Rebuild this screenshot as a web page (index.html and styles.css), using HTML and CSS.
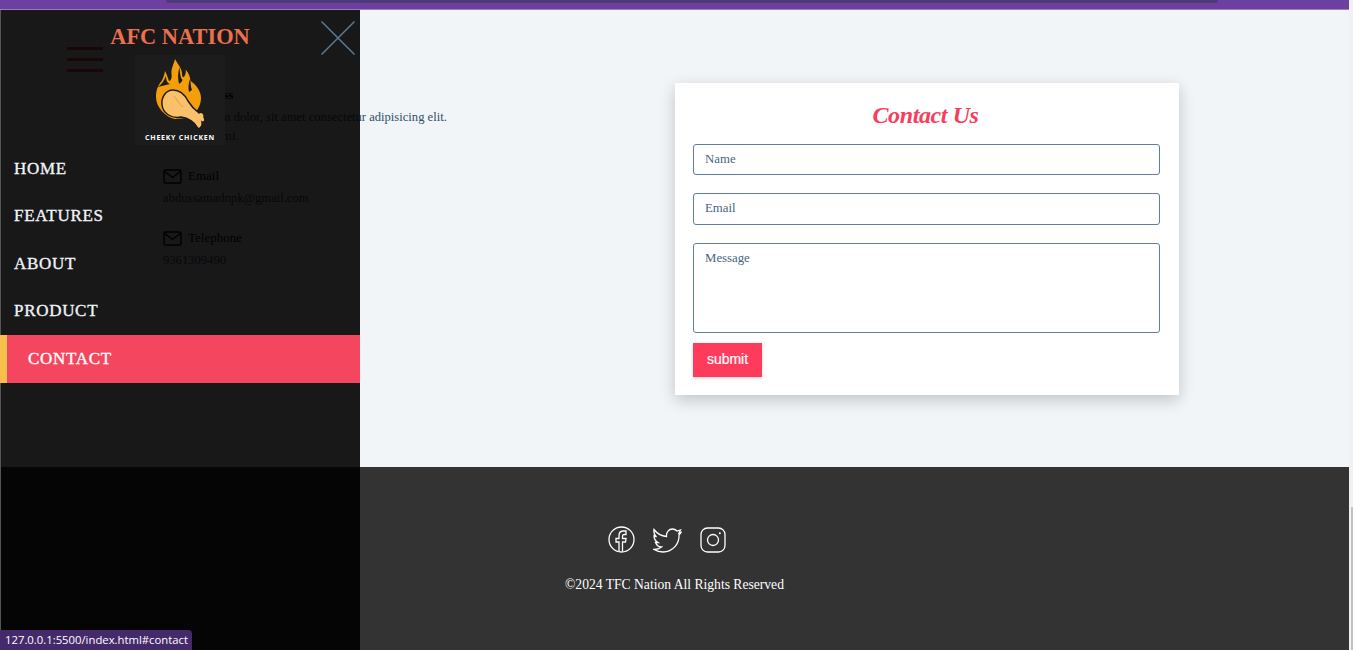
FILE: index.html
```html
<!DOCTYPE html>
<html lang="en">
<head>
<meta charset="utf-8">
<title>AFC Nation Contact</title>
<link rel="stylesheet" href="styles.css">
</head>
<body>
<div class="page">
  <div class="content">
    <div class="topbar"><div class="topbar-strip"></div></div>
    <main class="contact">
      <section class="info">
        <div class="info-block first">
          <h4 class="info-head"><svg class="mail" viewBox="0 0 20 16"><rect x="1" y="1" width="18" height="14" rx="1.500"/><path d="M1.500 2.500 10 9l8.500-6.500"/></svg>Address</h4>
          <p class="info-text">Lorem ipsum dolor, sit amet consectetur adipisicing elit.<br>Quidem animi.</p>
        </div>
        <div class="info-block">
          <h4 class="info-head"><svg class="mail" viewBox="0 0 20 16"><rect x="1" y="1" width="18" height="14" rx="1.500"/><path d="M1.500 2.500 10 9l8.500-6.500"/></svg>Email</h4>
          <p class="info-text">abdussamadnpk@gmail.com</p>
        </div>
        <div class="info-block">
          <h4 class="info-head"><svg class="mail" viewBox="0 0 20 16"><rect x="1" y="1" width="18" height="14" rx="1.500"/><path d="M1.500 2.500 10 9l8.500-6.500"/></svg>Telephone</h4>
          <p class="info-text">9361309490</p>
        </div>
      </section>
      <form class="card">
        <h2 class="card-title">Contact Us</h2>
        <input class="field field-name" type="text" placeholder="Name">
        <input class="field field-email" type="text" placeholder="Email">
        <textarea class="field field-msg" placeholder="Message"></textarea>
        <button class="submit" type="button">submit</button>
      </form>
    </main>
    <footer class="footer">
      <div class="socials">
        <svg class="social fb" viewBox="0 0 27 27"><circle cx="13.500" cy="13.500" r="12.500"/><path d="M11 26V16H8v-3.500h3V9.500C11 6.500 13 5 15.500 5H18v3.500h-2c-1 0-1.500.5-1.500 1.500v2.500H18l-.5 3.500h-3v9.500"/></svg>
        <svg class="social tw" viewBox="0 0 29 26"><path d="M1 2.500c3 4 7 6.500 12.500 7C13 5 16 2 19.500 2c2 0 3.500 1 4.500 2l3.500-1-1.500 3 2-.5-2 2.500C26.500 16.500 20 25 10 25c-3.500 0-6.500-1-9-2.500 3 0 5.500-.8 7.500-2.500-3 0-5-2-6-4.500h2.500C2.500 14 1 11.500 1 9l2.500 1C1.500 8 .5 5 1 2.500Z"/></svg>
        <svg class="social ig" viewBox="0 0 26 26"><rect x="1" y="1" width="24" height="24" rx="6.500"/><circle cx="13" cy="13" r="5.500"/><circle class="dot" cx="19.800" cy="6.200" r="1"/></svg>
      </div>
      <p class="copyright">©2024 TFC Nation All Rights Reserved</p>
    </footer>
  </div>
  <div class="scrollbar"><div class="thumb"></div></div>
</div>

<div class="burger"><span></span><span></span><span></span></div>

<aside class="sidebar">
  <h1 class="brand">AFC NATION</h1>
  <svg class="close" viewBox="0 0 34 34"><path d="M.5.500l33 33M33.500.500l-33 33"/></svg>
  <div class="logo">
    <svg class="logo-art" viewBox="0 0 90 76">
      <path class="flame" d="M40 4C43 10 47 13 47 19 47 23 49 23 50 20 51 18 51 16 50.500 14.500 54 18 55 22 55.500 26 60 29 66 35 66 43 66 52 60 60 52 63L40 64C30 62 21 52 21 42 21 35 23 31 25 28 27 26 29 22 30 16 32 20 33 23 34 26 36 26 37 23 36.500 19 36 13 39 9 40 4Z"/>
      <path class="notch" d="M35 29C32 28 31 25 31 21 29 26 26 30 22.500 32 27 31 31 30 35 29ZM47.500 25C45 22 45 17 44.500 12 43 17 42.500 23 44 29 45 28 47 27 47.500 25ZM57 35C55.500 32 56 28 55 24 53.500 28 53 33 54 37 55 36 56 36 57 35Z"/>
      <path class="leg" d="M27 50C26 42 31 35 38 35 45 35 50 40 53 46 56 51 60 55 64 58 67 56 70 59 69 62 71 65 69 68 67 67 68 71 64 76 62 72 60 68 54 63 46 62 36 64 28 58 27 50Z"/>
      <path class="vein" d="M39 41C42 45 44 49 48 52"/>
    </svg>
    <span class="logo-name">CHEEKY CHICKEN</span>
  </div>
  <nav class="nav">
    <a class="nav-link" href="#home">HOME</a>
    <a class="nav-link" href="#features">FEATURES</a>
    <a class="nav-link" href="#about">ABOUT</a>
    <a class="nav-link" href="#product">PRODUCT</a>
    <a class="nav-link active" href="#contact">CONTACT</a>
  </nav>
</aside>

<div class="status">127.0.0.1:5500/index.html#contact</div>
</body>
</html>
```
FILE: styles.css
```css
* { box-sizing: border-box; }
html, body { margin: 0; height: 650px; overflow: hidden; }
body { font-family: "Liberation Serif", serif; background: #f1f5f8; color: #334e68; }

.page { display: flex; height: 650px; }
.content { width: 1349px; display: flex; flex-direction: column; }
.scrollbar { flex: 1; background: #f1f1f1; display: flex; flex-direction: column; justify-content: flex-end; align-items: flex-end; }
.thumb { width: 2px; height: 143px; background: #c1c1c1; }

.topbar { height: 10px; background: #6c3fa0; border-bottom: 1px solid #9a7cc0; }
.topbar-strip { height: 3px; margin: 0 131px 0 166px; background: #4f3a78; border-radius: 0 0 4px 4px; }

.contact { height: 457px; display: flex; padding-left: 163px; background: #f1f5f8; }
.info { width: 512px; padding-top: 77.500px; font-size: 13px; }
.info-block { margin-bottom: 22.500px; }
.info-head { margin: 0; height: 15px; display: flex; align-items: center; gap: 6px; font-size: 13px; font-weight: 400; color: #000; }
.info-block.first .info-head { font-weight: 700; }
.mail { width: 19px; height: 15px; fill: none; stroke: #000; stroke-width: 1.500; }
.info-text { margin: 5.500px 0 0; font-size: 12.600px; line-height: 19px; color: #334e68; }

.card { width: 504px; height: 312px; margin-top: 73px; padding: 0 18px; background: #fff; box-shadow: 0 5px 15px rgba(0, 0, 0, .2); display: flex; flex-direction: column; align-items: flex-start; }
.card-title { margin: 15px 0 12px; width: 100%; height: 34px; padding-right: 3px; line-height: 34px; text-align: center; font-size: 24px; letter-spacing: -.4px; font-style: italic; font-weight: 700; color: #f43f5e; }
.field { display: block; width: 467px; padding: 0 11px; border: 1px solid #627d98; border-radius: 3px; background: #fff; font: 12.800px "Liberation Serif", serif; color: #334e68; outline: 0; resize: none; }
.field::placeholder { color: #486581; opacity: 1; }
.field-name { height: 31px; margin-bottom: 18px; }
.field-email { height: 32px; padding-bottom: 2px; margin-bottom: 18px; }
.field-msg { height: 90px; padding-top: 7px; margin-bottom: 10px; }
.submit { width: 69px; height: 34px; border: 0; padding: 0 0 2px; background: #ff3b5c; color: #fff; font: 400 14px "Liberation Sans", sans-serif; -webkit-text-stroke: .2px #fff; box-shadow: 0 1px 3px rgba(0, 0, 0, .2); }

.footer { height: 183px; background: #333; display: flex; flex-direction: column; align-items: center; padding-top: 59px; color: #fff; }
.socials { display: flex; align-items: center; height: 27px; gap: 18px; margin-right: 16px; }
.social { fill: none; stroke: #fff; stroke-width: 1.300; display: block; }
.fb { width: 27px; height: 27px; }
.tw { width: 29px; height: 26px; }
.ig { width: 26px; height: 26px; }
.dot { fill: #fff; stroke: none; }
.copyright { margin: 24px 0 0; font-size: 13.600px; line-height: 15px; color: #fff; }

.burger { position: absolute; left: 67px; top: 47px; width: 36px; height: 25px; display: flex; flex-direction: column; justify-content: space-between; }
.burger span { height: 3px; background: #f43f5e; }

.sidebar { position: absolute; left: 0; top: 10px; width: 360px; height: 640px; background: rgba(0, 0, 0, .9); border-left: 1px solid #555; }
.brand { margin: 13px 0 0 -1px; height: 27px; line-height: 27px; text-align: center; font-size: 22.400px; font-weight: 700; color: #ec6f50; }
.close { position: absolute; left: 320px; top: 11px; width: 34px; height: 34px; fill: none; stroke: #5a7a94; stroke-width: 1.500; }
.logo { position: relative; width: 90px; height: 90px; margin: 5px 0 0 134px; background: #1c1c1c; }
.logo-art { display: block; width: 90px; height: 76px; }
.flame { fill: #f59e0b; }
.notch { fill: #1c1c1c; }
.leg { fill: #fbc16a; stroke: #1c1c1c; stroke-width: 1.500; }
.vein { fill: none; stroke: #b98a44; stroke-width: .6; }
.logo-name { position: absolute; left: 0; right: 0; top: 78px; text-align: center; font: 700 7px/10px "Open Sans", sans-serif; letter-spacing: .75px; color: #fff; white-space: nowrap; }
.nav { display: flex; flex-direction: column; }
.nav-link { display: block; height: 47.300px; line-height: 47px; padding-left: 13px; font-size: 17px; letter-spacing: .7px; -webkit-text-stroke: .35px; color: #f0f4f8; text-decoration: none; }
.nav-link.active { padding-left: 21px; margin: .8px 0 0 -1px; border-left: 7px solid #f7c04a; background: #f4475f; color: #fff; height: 48px; }

.status { position: absolute; left: 0; top: 630px; width: 192px; height: 20px; padding-left: 5px; background: #452a6b; border-radius: 0 4px 0 0; font: 11.300px/20px "Open Sans", sans-serif; color: #fff; white-space: nowrap; }
```
